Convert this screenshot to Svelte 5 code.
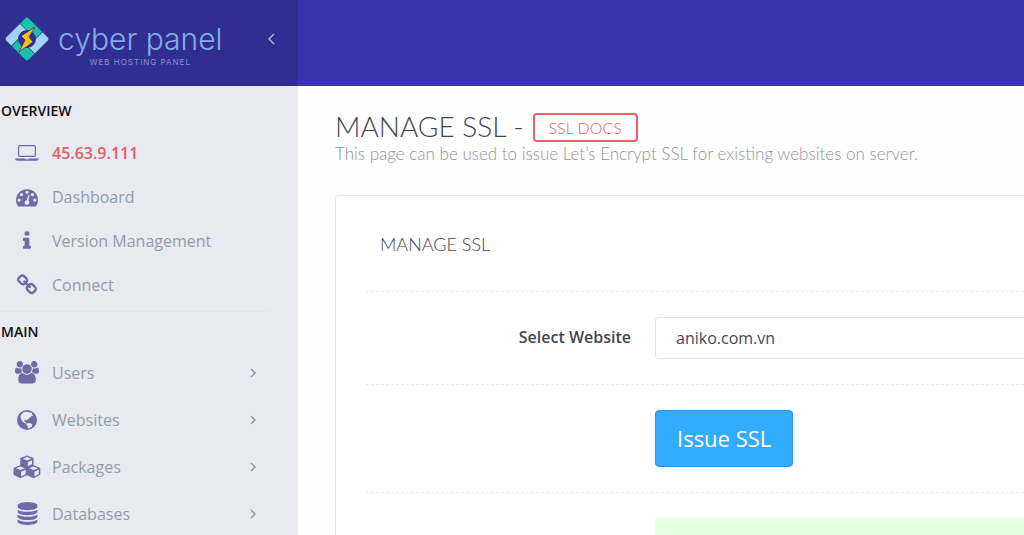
<script>
  const icons = {
    dashboard: {
      box: '0 0 1792 1792',
      width: 22,
      path: 'M384 1152q0-53-37.5-90.5t-90.5-37.5-90.5 37.5-37.5 90.5 37.5 90.5 90.5 37.5 90.5-37.5 37.5-90.5zm192-448q0-53-37.5-90.5t-90.5-37.5-90.5 37.5-37.5 90.5 37.5 90.5 90.5 37.5 90.5-37.5 37.5-90.5zm428 481l101-382q6-26-7.5-48.5t-38.5-29.5-48 6.5-30 39.5l-101 382q-60 5-107 43.5t-63 98.5q-20 77 20 146t117 89 146-20 89-117q16-60-6-117t-72-91zm660-33q0-53-37.5-90.5t-90.5-37.5-90.5 37.5-37.5 90.5 37.5 90.5 90.5 37.5 90.5-37.5 37.5-90.5zm-640-640q0-53-37.5-90.5t-90.5-37.5-90.5 37.5-37.5 90.5 37.5 90.5 90.5 37.5 90.5-37.5 37.5-90.5zm448 192q0-53-37.5-90.5t-90.5-37.5-90.5 37.5-37.5 90.5 37.5 90.5 90.5 37.5 90.5-37.5 37.5-90.5zm320 448q0 261-141 483-19 29-54 29h-1402q-35 0-54-29-141-221-141-483 0-182 71-348t191-286 286-191 348-71 348 71 286 191 191 286 71 348z'
    },
    info: {
      box: '0 0 1792 1792',
      width: 22,
      path: 'M1216 1344v128q0 26-19 45t-45 19h-512q-26 0-45-19t-19-45v-128q0-26 19-45t45-19h64v-384h-64q-26 0-45-19t-19-45v-128q0-26 19-45t45-19h384q26 0 45 19t19 45v576h64q26 0 45 19t19 45zm-128-1152v192q0 26-19 45t-45 19h-256q-26 0-45-19t-19-45v-192q0-26 19-45t45-19h256q26 0 45 19t19 45z'
    },
    link: {
      box: '0 0 1792 1792',
      width: 22,
      path: 'M1520 1216q0-40-28-68l-208-208q-28-28-68-28-42 0-72 32 3 3 19 18.5t21.5 21.5 15 19 13 25.5 3.5 27.5q0 40-28 68t-68 28q-15 0-27.5-3.5t-25.5-13-19-15-21.5-21.5-18.5-19q-33 31-33 73 0 40 28 68l206 207q27 27 68 27 40 0 68-26l147-146q28-28 28-67zm-703-705q0-40-28-68l-206-207q-28-28-68-28-39 0-68 27l-147 146q-28 28-28 67 0 40 28 68l208 208q27 27 68 27 42 0 72-31-3-3-19-18.5t-21.5-21.5-15-19-13-25.5-3.5-27.5q0-40 28-68t68-28q15 0 27.5 3.5t25.5 13 19 15 21.5 21.5 18.5 19q33-31 33-73zm895 705q0 120-85 203l-147 146q-83 83-203 83-121 0-204-85l-206-207q-83-83-83-203 0-123 88-209l-88-88q-86 88-208 88-120 0-204-84l-208-208q-84-84-84-204t85-203l147-146q83-83 203-83 121 0 204 85l206 207q83 83 83 203 0 123-88 209l88 88q86-88 208-88 120 0 204 84l208 208q84 84 84 204z'
    },
    users: {
      box: '0 0 1920 1792',
      width: 24,
      path: 'M593 896q-162 5-265 128h-134q-82 0-138-40.5t-56-118.5q0-353 124-353 6 0 43.5 21t97.5 42.5 119 21.5q67 0 133-23-5 37-5 66 0 139 81 256zm1071 637q0 120-73 189.5t-194 69.5h-874q-121 0-194-69.5t-73-189.5q0-53 3.5-103.5t14-109 26.5-108.5 43-97.5 62-81 85.5-53.5 111.5-20q10 0 43 21.5t73 48 107 48 135 21.5 135-21.5 107-48 73-48 43-21.5q61 0 111.5 20t85.5 53.5 62 81 43 97.5 26.5 108.5 14 109 3.5 103.5zm-1024-1277q0 106-75 181t-181 75-181-75-75-181 75-181 181-75 181 75 75 181zm704 384q0 159-112.5 271.5t-271.5 112.5-271.5-112.5-112.5-271.5 112.5-271.5 271.5-112.5 271.5 112.5 112.5 271.5zm576 225q0 78-56 118.5t-138 40.5h-134q-103-123-265-128 81-117 81-256 0-29-5-66 66 23 133 23 59 0 119-21.5t97.5-42.5 43.5-21q124 0 124 353zm-128-609q0 106-75 181t-181 75-181-75-75-181 75-181 181-75 181 75 75 181z'
    },
    globe: {
      box: '0 0 20 20',
      width: 20,
      path: 'M10 0a10 10 0 1 0 0 20a10 10 0 0 0 0-20zM6.2 2.6L8.3 1.7L10.6 1.8L11.7 2.6L13.4 2.2L15.6 3.7L14.9 4.6L16.2 5.4L15.2 6.2L13.7 5.7L14.2 7L12.6 7.6L11.6 9L10.3 9.6L10 11L9.2 9.8L7.6 10.1L7.2 11.6L8.6 11.8L9 13.2L10.4 13.6L12 13.1L14 13.6L15.4 14.8L14.8 16.4L12.6 18L10.6 18.5L11 16.4L9.6 15L9.2 13.7L7 12.8L5 11L3.9 9L3.4 6.6L4.6 4z'
    },
    cubes: {
      box: '0 0 28 24',
      width: 28,
      path: 'M14 0.5L20.5 3V10L27.3 13V19.8L20.8 23.3L14 20.2L7.2 23.3L0.5 19.8V13L7.3 10V3zM14 2L9.8 3.7L14 5.5L18.2 3.7zM14.8 7.2V11L19 9.3V5.2zM7.5 11.4L3 13.2L7.5 15L11.7 13.2zM8.1 16.8V21.4L12.7 19.2V14.7zM20.6 11.4L16.3 13.2L20.6 15L25 13.2zM21.4 16.8V21.4L25.8 19.1V14.7z'
    },
    database: {
      box: '0 0 1792 1792',
      width: 23,
      path: 'M896 768q237 0 443-43t325-127v170q0 69-103 128t-280 93.5-385 34.5-385-34.5-280-93.5-103-128v-170q119 84 325 127t443 43zm0 768q237 0 443-43t325-127v170q0 69-103 128t-280 93.5-385 34.5-385-34.5-280-93.5-103-128v-170q119 84 325 127t443 43zm0-384q237 0 443-43t325-127v170q0 69-103 128t-280 93.5-385 34.5-385-34.5-280-93.5-103-128v-170q119 84 325 127t443 43zm0-1152q208 0 385 34.5t280 93.5 103 128v128q0 69-103 128t-280 93.5-385 34.5-385-34.5-280-93.5-103-128v-128q0-69 103-128t280-93.5 385-34.5z'
    },
    laptop: {
      box: '0 0 24 18',
      width: 24,
      path: 'M5 1H19A2 2 0 0 1 21 3V11A2 2 0 0 1 19 13H5A2 2 0 0 1 3 11V3A2 2 0 0 1 5 1zM5 2.2A0.8 0.8 0 0 0 4.2 3V11A0.8 0.8 0 0 0 5 11.8H19A0.8 0.8 0 0 0 19.8 11V3A0.8 0.8 0 0 0 19 2.2zM0 14.5H10V15.2H14V14.5H24Q24 16.8 21.5 16.8H2.5Q0 16.8 0 14.5z'
    }
  };

  const overview = [
    { label: '45.63.9.111', icon: 'laptop', address: true },
    { label: 'Dashboard', icon: 'dashboard' },
    { label: 'Version Management', icon: 'info' },
    { label: 'Connect', icon: 'link' }
  ];

  const mainMenu = [
    { label: 'Users', icon: 'users' },
    { label: 'Websites', icon: 'globe' },
    { label: 'Packages', icon: 'cubes' },
    { label: 'Databases', icon: 'database' }
  ];

  const websites = ['aniko.com.vn'];

  let selected = $state(websites[0]);
</script>

{#snippet menuIcon(name)}
  <span class="menu-icon">
    <svg viewBox={icons[name].box} width={icons[name].width} aria-hidden="true">
      <path fill-rule="evenodd" d={icons[name].path} />
    </svg>
  </span>
{/snippet}

<div class="layout">
  <header class="brand">
    <a class="logo" href="#home">
      <svg class="logo-mark" viewBox="0 0 46 46" width="46" height="46" aria-hidden="true">
        <g transform="rotate(45 23 23) translate(7 7)" stroke="#25417f" stroke-width="0.8">
          <path d="M2 0H22V11H0V2Q0 0 2 0z" fill="#17c3b0" />
          <path d="M22 0H30Q32 0 32 2V22H22z" fill="#a5d3f7" />
          <path d="M10 21H32V30Q32 32 30 32H10z" fill="#17c3b0" />
          <path d="M0 10H10V32H2Q0 32 0 30z" fill="#a5d3f7" />
          <circle cx="16" cy="16" r="9" fill="#302f91" stroke="none" />
        </g>
        <path d="M31 11L17 20L21 24L15 36L29 26L25 21z" fill="#fdbd19" stroke="#3a2f6b" stroke-width="0.8" />
      </svg>
      <span class="logo-text">
        <span class="logo-name">cyber panel</span>
        <span class="logo-tagline">WEB HOSTING PANEL</span>
      </span>
    </a>
    <button class="collapse" aria-label="Collapse sidebar">
      <svg viewBox="0 0 8 12" width="8" height="12" aria-hidden="true">
        <path d="M7 1L2 6L7 11" />
      </svg>
    </button>
  </header>
  <div class="topbar"></div>

  <nav class="sidebar">
    <h2>OVERVIEW</h2>
    <ul class="overview">
      {#each overview as item}
        <li>
          <a href="#{item.icon}" class:address={item.address}>
            {@render menuIcon(item.icon)}
            <span>{item.label}</span>
          </a>
        </li>
      {/each}
    </ul>

    <h2>MAIN</h2>
    <ul class="main-menu">
      {#each mainMenu as item}
        <li>
          <a href="#{item.icon}">
            {@render menuIcon(item.icon)}
            <span>{item.label}</span>
            <svg class="arrow" viewBox="0 0 6 10" width="6" height="10" aria-hidden="true">
              <path d="M1 1L5 5L1 9" />
            </svg>
          </a>
        </li>
      {/each}
    </ul>
  </nav>

  <main>
    <div class="page-title">
      <h1>MANAGE SSL - <a class="docs" href="#docs">SSL DOCS</a></h1>
      <p>This page can be used to issue Let’s Encrypt SSL for existing websites on server.</p>
    </div>

    <section class="panel">
      <h3>MANAGE SSL</h3>
      <form onsubmit={(e) => e.preventDefault()}>
        <div class="form-row">
          <label for="website">Select Website</label>
          <select id="website" bind:value={selected}>
            {#each websites as website}
              <option value={website}>{website}</option>
            {/each}
          </select>
        </div>
        <div class="form-row">
          <button class="issue">Issue SSL</button>
        </div>
        <div class="form-row">
          <div class="alert" role="status"></div>
        </div>
      </form>
    </section>
  </main>
</div>

<style>
  :global(body) {
    margin: 0;
    overflow: hidden;
    font-family: 'Open Sans', 'Noto Sans', sans-serif;
  }

  .layout {
    display: grid;
    grid-template-columns: 298px minmax(0, 1fr);
    grid-template-rows: 86px minmax(0, 1fr);
    height: 100vh;
    background: #fefefe;
  }

  .brand {
    display: flex;
    align-items: center;
    justify-content: space-between;
    box-sizing: border-box;
    padding: 0 17px 8px 4px;
    background: #302f91;
  }

  .topbar {
    background: #3936ac;
  }

  .logo {
    display: flex;
    align-items: center;
    gap: 8px;
    text-decoration: none;
  }

  .logo-text {
    display: flex;
    flex-direction: column;
    align-items: center;
    padding-top: 10px;
    font-family: Inter, sans-serif;
  }

  .logo-name {
    font-size: 30px;
    font-weight: 300;
    line-height: 36px;
    color: #84acec;
  }

  .logo-tagline {
    font-size: 8px;
    line-height: 10px;
    letter-spacing: 1px;
    color: #8a8fd0;
  }

  .collapse {
    display: flex;
    padding: 6px;
    border: 0;
    background: none;
    cursor: pointer;
  }

  .collapse path,
  .arrow path {
    fill: none;
    stroke: #aeb0dd;
    stroke-width: 1.5;
  }

  .sidebar {
    overflow: hidden;
    background: #e9e9f2;
  }

  .sidebar h2 {
    margin: 0;
    padding: 14px 0 0 1px;
    font-size: 14px;
    font-weight: 600;
    line-height: 22px;
    color: #111;
  }

  .sidebar ul {
    margin: 0;
    padding: 0;
    list-style: none;
  }

  .sidebar .overview {
    padding: 9px 0 4px;
    margin-right: 28px;
    border-bottom: 1px solid #e3e4ee;
  }

  .sidebar h2:nth-of-type(2) {
    padding-top: 9px;
  }

  .sidebar .main-menu {
    padding-top: 6px;
  }

  .sidebar a {
    display: flex;
    align-items: center;
    gap: 11px;
    height: 44px;
    padding: 0 42px 0 13px;
    font-size: 16px;
    color: #8da0aa;
    text-decoration: none;
  }

  .sidebar .main-menu a {
    height: 47px;
  }

  .sidebar a.address {
    font-weight: 600;
    color: #dc6066;
  }

  .menu-icon {
    display: flex;
    justify-content: center;
    width: 28px;
    fill: #6f6ba9;
  }

  .arrow {
    margin-left: auto;
  }

  .arrow path {
    stroke: #8c98a5;
  }

  main {
    overflow: hidden;
    padding: 24px 0 0 37px;
  }

  .page-title {
    font-family: Lato, 'Open Sans', sans-serif;
    font-weight: 300;
  }

  h1 {
    display: flex;
    align-items: flex-end;
    gap: 9px;
    margin: 0;
    font-size: 28px;
    font-weight: 300;
    line-height: 32px;
    color: #3e4855;
  }

  .docs {
    padding: 0 14px;
    border: 2px solid #ef5f64;
    border-radius: 4px;
    font-size: 16px;
    font-weight: 300;
    line-height: 25px;
    color: #f05a60;
    text-decoration: none;
  }

  .page-title p {
    margin: 0;
    padding-top: 2px;
    font-size: 17px;
    line-height: 20px;
    color: #8f949a;
  }

  .panel {
    margin-top: 31px;
    padding: 30px 0 0 30px;
    border: 1px solid #e6e8ea;
    border-right: 0;
    border-top-left-radius: 4px;
    background: #fff;
  }

  h3 {
    margin: 0;
    padding: 6px 0 35px 14px;
    font-family: Lato, 'Open Sans', sans-serif;
    font-size: 18px;
    font-weight: 300;
    line-height: 24px;
    color: #3e4855;
  }

  .form-row {
    display: grid;
    grid-template-columns: 265px minmax(0, 1fr);
    column-gap: 24px;
    padding: 25px 0;
    border-top: 1px dashed #e9ebed;
  }

  .form-row label {
    padding-top: 8px;
    font-size: 16px;
    font-weight: 600;
    line-height: 24px;
    text-align: right;
    color: #3e4855;
  }

  select {
    appearance: none;
    height: 42px;
    padding: 0 20px;
    border: 1px solid #e2e4e8;
    border-right: 0;
    border-radius: 4px 0 0 4px;
    background: #fff;
    font-family: inherit;
    font-size: 16px;
    color: #3e4855;
  }

  .issue {
    grid-column: 2;
    justify-self: start;
    padding: 12px 21px;
    border: 1px solid #2a97ea;
    border-radius: 4px;
    background: #33abff;
    font-family: inherit;
    font-size: 22px;
    line-height: 31px;
    color: #fff;
    cursor: pointer;
  }

  .alert {
    grid-column: 2;
    min-height: 50px;
    border-top-left-radius: 3px;
    background: #e2ffe2;
  }
</style>
